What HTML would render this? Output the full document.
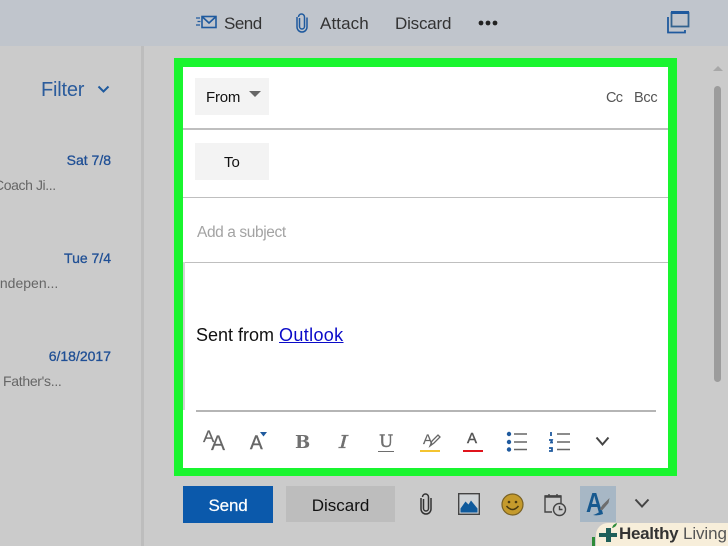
<!DOCTYPE html>
<html><head><meta charset="utf-8">
<style>
html,body{margin:0;padding:0}
body{width:728px;height:546px;overflow:hidden;position:relative;background:#cbcbcb;font-family:"Liberation Sans",sans-serif}
.a{position:absolute;white-space:nowrap}
.t{position:absolute;white-space:nowrap;line-height:20px;height:20px}
svg{position:absolute;overflow:visible}
</style></head><body>
<div class="a" style="left:0;top:0;width:728px;height:46px;background:#c0c5cc"></div>
<div class="a" style="left:141px;top:46px;width:3px;height:500px;background:#bdbdbd"></div>

<svg style="left:195px;top:15px" width="22" height="16" fill="none" stroke="#1f5a9e" stroke-width="1.6"><rect x="7" y="1.5" width="14" height="11"/><path d="M7.500 2l6.500 6 6.500-6"/><path d="M1 3h4M2.500 6.500h3M1 10h4" stroke-width="1.300"/></svg>
<div class="t" style="left:224px;top:14px;font-size:17px;color:#333;letter-spacing:-.5px">Send</div>
<svg style="left:296px;top:13px" width="12" height="20" fill="none" stroke="#1f5a9e" stroke-width="1.500"><path d="M3.500 5v8.500a2.500 2.500 0 0 0 5 0V4a3 3 0 0 0-6 0"/><path d="M1 4v10a5 5 0 0 0 10 0V4.500"/></svg>
<div class="t" style="left:320px;top:14px;font-size:17px;color:#333;letter-spacing:.1px">Attach</div>
<div class="t" style="left:395px;top:14px;font-size:17px;color:#333;letter-spacing:-.2px">Discard</div>
<svg style="left:478px;top:19px" width="20" height="8" fill="#222"><circle cx="3" cy="4" r="2.400"/><circle cx="10" cy="4" r="2.400"/><circle cx="17" cy="4" r="2.400"/></svg>
<svg style="left:667px;top:11px" width="24" height="23" fill="none" stroke="#1f5a9e" stroke-width="1.800"><rect x="4.500" y="2" width="17" height="13.500" stroke="#33638f"/><path d="M4 1.500h18" stroke-width="3"/><path d="M1 6v15.500h17V19"/></svg>

<div class="t" style="left:41px;top:80px;font-size:20px;color:#2b5c9c;letter-spacing:-.2px">Filter</div>
<svg style="left:97px;top:85px" width="13" height="9" fill="none" stroke="#1f5a9e" stroke-width="2"><path d="M1.500 1.500l5 5 5-5"/></svg>

<div class="t" style="right:617px;top:150px;font-size:14px;font-weight:400;color:#1f4f95;-webkit-text-stroke:.3px #1f4f95">Sat 7/8</div>
<div class="t" style="left:-6px;top:175px;font-size:14px;color:#666;letter-spacing:-.4px">Coach Ji...</div>
<div class="t" style="right:617px;top:248px;font-size:14px;color:#1f4f95;-webkit-text-stroke:.3px #1f4f95">Tue 7/4</div>
<div class="t" style="left:-4px;top:273px;font-size:14px;color:#666">Indepen...</div>
<div class="t" style="right:617px;top:346px;font-size:14px;color:#1f4f95;-webkit-text-stroke:.3px #1f4f95">6/18/2017</div>
<div class="t" style="left:3px;top:371px;font-size:14px;color:#666;letter-spacing:-.3px">Father's...</div>

<div class="a" style="left:174px;top:58px;width:503px;height:418px;background:#19f52f"></div>
<div class="a" style="left:183px;top:67px;width:485px;height:401px;background:#fff"></div>
<div class="a" style="left:183px;top:128px;width:485px;height:1.500px;background:#bfbfbf"></div>
<div class="a" style="left:183px;top:196.500px;width:485px;height:1.500px;background:#bfbfbf"></div>
<div class="a" style="left:183px;top:261.500px;width:485px;height:1.500px;background:#bfbfbf"></div>
<div class="a" style="left:183px;top:262px;width:2px;height:148px;background:#d4d4d4"></div>
<div class="a" style="left:196px;top:410px;width:460px;height:1.500px;background:#b5b5b5"></div>

<div class="a" style="left:195px;top:78px;width:74px;height:37px;background:#f3f3f3"></div>
<div class="t" style="left:206px;top:88px;font-size:15px;color:#111;letter-spacing:-.2px">From</div>
<svg style="left:249px;top:91px" width="12" height="6" fill="#666"><path d="M0 0h12L6 6z"/></svg>
<div class="t" style="left:606px;top:88px;font-size:14.500px;color:#555;letter-spacing:-.7px">Cc</div>
<div class="t" style="left:634px;top:88px;font-size:14.500px;color:#555;letter-spacing:-.3px">Bcc</div>
<div class="a" style="left:195px;top:143px;width:74px;height:37px;background:#f3f3f3"></div>
<div class="t" style="left:224px;top:153px;font-size:15px;color:#111">To</div>
<div class="t" style="left:197px;top:223px;font-size:15.500px;color:#a3a3a3;letter-spacing:-.4px">Add a subject</div>
<div class="t" style="left:196px;top:325px;font-size:18px;color:#111">Sent from <span style="color:#0a0ac8;text-decoration:underline;letter-spacing:.35px">Outlook</span></div>

<div class="t" style="left:203px;top:427px;font-size:17px;color:#666;-webkit-text-stroke:.2px #666">A</div>
<div class="t" style="left:211px;top:434px;font-size:21px;color:#666;-webkit-text-stroke:.2px #666">A</div>
<div class="t" style="left:250px;top:434px;font-size:19px;color:#666;-webkit-text-stroke:.4px #666">A</div>
<svg style="left:258px;top:432px" width="9" height="5" fill="#1f5a9e"><path d="M2 0h7L5.500 4.500z"/></svg>
<div class="t" style="left:295px;top:433px;font:bold 18px/20px 'DejaVu Serif',serif;color:#707070">B</div>
<div class="t" style="left:340px;top:433px;font:italic 18px/20px 'DejaVu Serif',serif;color:#707070;-webkit-text-stroke:.3px #707070;transform:scaleX(1.3)">I</div>
<div class="t" style="left:379px;top:432px;font:17px/20px 'DejaVu Serif',serif;color:#707070;-webkit-text-stroke:.4px #707070">U</div>
<div class="a" style="left:378px;top:450.500px;width:16px;height:1.500px;background:#6e6e6e"></div>
<div class="t" style="left:423px;top:429px;font-size:14px;color:#666;-webkit-text-stroke:.2px #666">A</div>
<svg style="left:429px;top:434px" width="12" height="14" fill="none" stroke="#666" stroke-width="1.300"><path d="M1 12l2-5 6-6 2 2-6 6z"/></svg>
<div class="a" style="left:420px;top:449.500px;width:20px;height:2.500px;background:#f4c430"></div>
<div class="t" style="left:467px;top:429px;font-size:15px;color:#555;-webkit-text-stroke:.4px #555">A</div>
<div class="a" style="left:463px;top:449.500px;width:20px;height:2.500px;background:#e0141c"></div>
<svg style="left:506px;top:431px" width="22" height="21"><g fill="#1f5a9e"><circle cx="3" cy="3" r="2.200"/><circle cx="3" cy="11" r="2.200"/><circle cx="3" cy="18.500" r="2.200"/></g><g stroke="#666" stroke-width="1.400"><path d="M8 3h13M8 11h13M8 18.500h13"/></g></svg>
<svg style="left:548px;top:431px" width="22" height="21"><g stroke="#1f5a9e" stroke-width="1.800" fill="none"><path d="M3 1v4M1 9h3l-1 2.500h2M1 17h3v3H1"/></g><g stroke="#666" stroke-width="1.400"><path d="M9 3h13M9 11h13M9 18.500h13"/></g></svg>
<svg style="left:595px;top:436px" width="16" height="11" fill="none" stroke="#444" stroke-width="2"><path d="M1.500 1.500l6 7 6-7"/></svg>

<div class="a" style="left:183px;top:486px;width:90px;height:37px;background:#0b59ab"></div>
<div class="t" style="left:183px;width:90px;text-align:center;top:496px;font-size:17px;color:#fff;-webkit-text-stroke:.2px #fff;letter-spacing:-.2px">Send</div>
<div class="a" style="left:286px;top:486px;width:109px;height:36px;background:#bdbdbd"></div>
<div class="t" style="left:286px;width:109px;text-align:center;top:496px;font-size:17px;color:#111">Discard</div>
<svg style="left:420px;top:493px" width="12" height="22" fill="none" stroke="#333" stroke-width="1.500"><path d="M3.500 6v9.500a2.500 2.500 0 0 0 5 0V4a3 3 0 0 0-6 0"/><path d="M1 5v11a5 5 0 0 0 10 0V5"/></svg>
<svg style="left:458px;top:493px" width="22" height="22"><rect x=".7" y=".7" width="20.600" height="20.600" fill="#cfd3d6" stroke="#444" stroke-width="1.400"/><path d="M2.500 19.500v-4l5-7 3 3 2.500-4 6.500 8v4z" fill="#0f5a9c"/></svg>
<svg style="left:501px;top:493px" width="23" height="23"><circle cx="11.500" cy="11.500" r="10.500" fill="#c49a2c" stroke="#7a6224" stroke-width="1.200"/><circle cx="8" cy="9" r="1.300" fill="#4a3a10"/><circle cx="15" cy="9" r="1.300" fill="#4a3a10"/><path d="M5.500 13q6 7 12 0" fill="none" stroke="#4a3a10" stroke-width="1.500"/></svg>
<svg style="left:544px;top:493px" width="23" height="24" fill="none" stroke="#444" stroke-width="1.400"><path d="M8 19H1V3h16v7"/><path d="M1 3.500h16" stroke-width="2.500"/><path d="M5 1v3M13 1v3"/><circle cx="15.500" cy="16.500" r="6"/><path d="M15.500 13v3.500h3"/></svg>
<div class="a" style="left:580px;top:486px;width:36px;height:36px;background:#a7b7c5"></div>
<div class="t" style="left:586px;top:490px;font-size:28px;line-height:25px;height:25px;font-weight:bold;color:#17598f;transform:scaleX(.82);transform-origin:left">A</div>
<svg style="left:588px;top:497px" width="22" height="20"><path d="M21.500 1l-7 7-3 4.500 3 .5 6-7z" fill="#6d6d6d"/><path d="M5 18q5 1 10-1l-1-4q-5 4-9 5z" fill="#17598f"/></svg>
<svg style="left:634px;top:498px" width="16" height="11" fill="none" stroke="#444" stroke-width="2"><path d="M1.500 1.500l6.500 7 6.500-7"/></svg>

<div class="a" style="left:714px;top:86px;width:7px;height:296px;background:#9c9c9c;border-radius:4px"></div>
<svg style="left:713px;top:66px" width="10" height="5" fill="#a8a8a8"><path d="M0 5L5 0l5 5z"/></svg>

<div class="a" style="left:596px;top:523px;width:132px;height:23px;background:#f7eeda;border-radius:12px 0 0 0"></div>
<div class="a" style="left:592px;top:537px;width:3px;height:9px;background:#2e8b3a"></div>
<svg style="left:599px;top:523px" width="22" height="22"><path d="M7 5h5v5h6v4h-6v5H7v-5H0v-4h7z" fill="#1f5f5a"/><path d="M13 5q1-4 5-5-.5 4-5 5z" fill="#2e8b3a"/></svg>
<div class="t" style="left:619px;top:524px;font-size:17px;font-weight:bold;color:#333;letter-spacing:-.3px">Healthy</div>
<div class="t" style="left:683px;top:524px;font-size:17px;color:#555;letter-spacing:-.1px">Living</div>
</body></html>
